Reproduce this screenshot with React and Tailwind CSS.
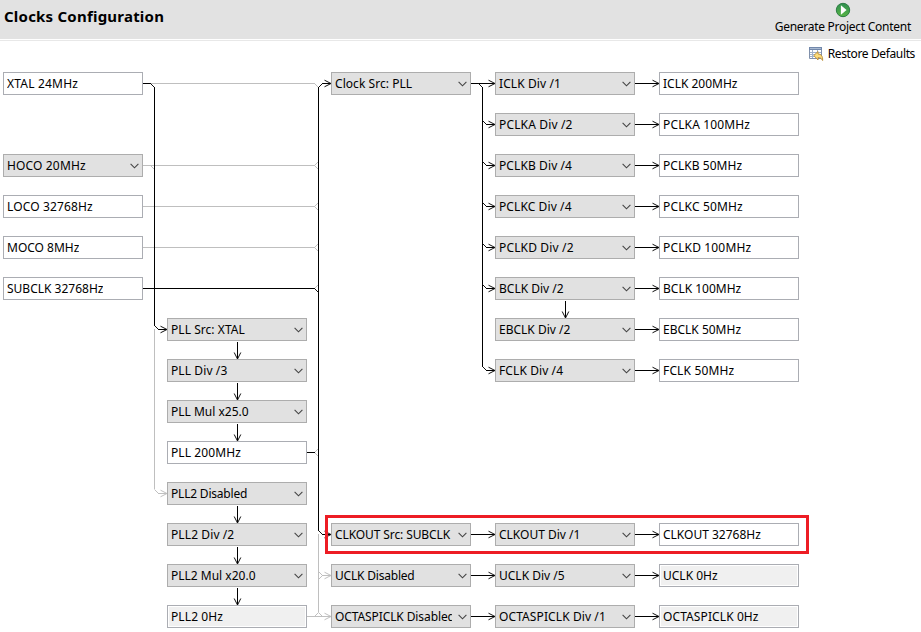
const C = {
  1: "col-start-1", 2: "col-start-2", 3: "col-start-3", 4: "col-start-4", 5: "col-start-5",
};
const R = [
  "row-start-1", "row-start-2", "row-start-3", "row-start-4", "row-start-5", "row-start-6", "row-start-7",
  "row-start-8", "row-start-9", "row-start-10", "row-start-11", "row-start-12", "row-start-13", "row-start-14",
];

// kind: v = value, s = select, d = disabled value
const NODES = [
  [1, 0, "v", "XTAL 24MHz", "tracking-[0.2px]"],
  [1, 2, "s", "HOCO 20MHz", "tracking-[0.15px]"],
  [1, 3, "v", "LOCO 32768Hz", "tracking-[0.15px]"],
  [1, 4, "v", "MOCO 8MHz"],
  [1, 5, "v", "SUBCLK 32768Hz"],
  [2, 6, "s", "PLL Src: XTAL", "tracking-[0.05px]"],
  [2, 7, "s", "PLL Div /3", "tracking-[0.1px]"],
  [2, 8, "s", "PLL Mul x25.0"],
  [2, 9, "v", "PLL 200MHz", "tracking-[0.1px]"],
  [2, 10, "s", "PLL2 Disabled", "tracking-[-0.2px]"],
  [2, 11, "s", "PLL2 Div /2", "tracking-[0.1px]"],
  [2, 12, "s", "PLL2 Mul x20.0"],
  [2, 13, "d", "PLL2 0Hz", "tracking-[0.1px]"],
  [3, 0, "s", "Clock Src: PLL", "tracking-[0.05px]"],
  [3, 11, "s", "CLKOUT Src: SUBCLK", "tracking-[-0.1px]"],
  [3, 12, "s", "UCLK Disabled", "tracking-[-0.2px]"],
  [3, 13, "s", "OCTASPICLK Disabled", "tracking-[-0.1px]"],
  [4, 0, "s", "ICLK Div /1", "tracking-[0.1px]"],
  [4, 1, "s", "PCLKA Div /2", "tracking-[0.15px]"],
  [4, 2, "s", "PCLKB Div /4", "tracking-[0.1px]"],
  [4, 3, "s", "PCLKC Div /4", "tracking-[0.1px]"],
  [4, 4, "s", "PCLKD Div /2", "tracking-[0.15px]"],
  [4, 5, "s", "BCLK Div /2"],
  [4, 6, "s", "EBCLK Div /2"],
  [4, 7, "s", "FCLK Div /4", "tracking-[0.1px]"],
  [4, 11, "s", "CLKOUT Div /1"],
  [4, 12, "s", "UCLK Div /5"],
  [4, 13, "s", "OCTASPICLK Div /1", "tracking-[0.1px]"],
  [5, 0, "v", "ICLK 200MHz"],
  [5, 1, "v", "PCLKA 100MHz", "tracking-[0.15px]"],
  [5, 2, "v", "PCLKB 50MHz", "tracking-[0.05px]"],
  [5, 3, "v", "PCLKC 50MHz", "tracking-[0.15px]"],
  [5, 4, "v", "PCLKD 100MHz", "tracking-[0.15px]"],
  [5, 5, "v", "BCLK 100MHz"],
  [5, 6, "v", "EBCLK 50MHz"],
  [5, 7, "v", "FCLK 50MHz", "tracking-[0.15px]"],
  [5, 11, "v", "CLKOUT 32768Hz"],
  [5, 12, "d", "UCLK 0Hz"],
  [5, 13, "d", "OCTASPICLK 0Hz", "tracking-[0.1px]"],
];

const KIND = {
  v: "border-[#abadb3] bg-white",
  s: "border-[#adadad] bg-[#e1e1e1]",
  d: "border-[#abadb3] bg-[#f0f0f0] shadow-[inset_0_0_0_1px_#fff]",
};

function Node({ col, row, kind, label, tracking = "" }) {
  return (
    <div className={`${C[col]} ${R[row]} ${KIND[kind]} flex items-center border pl-[3px]`}>
      <span className={`overflow-hidden whitespace-nowrap ${tracking} ${kind === "s" ? "w-[117px]" : ""}`}>{label}</span>
      {kind === "s" && (
        <svg className="ml-auto mr-[3.5px] shrink-0" width="9" height="6" viewBox="0 0 9 6">
          <path d="M.6 .9 4.5 4.8 8.4 .9" fill="none" stroke="#444" strokeWidth="1.1" />
        </svg>
      )}
    </div>
  );
}

const mid = (row) => 83.5 + 41 * row;
const headRight = (x, y) => `M${x - 6.5} ${y - 3.3}L${x} ${y}L${x - 6.5} ${y + 3.3}`;
const headDown = (x, y) => `M${x - 3.3} ${y - 6.5}L${x} ${y}L${x + 3.3} ${y - 6.5}`;

function Wires() {
  const gray = [];
  const black = [];
  const grayDiag = [];
  const heads = [];
  const diag = [];
  [0, 2, 3, 4].forEach((r) => gray.push(`M143 ${mid(r)}H315`));
  gray.push("M154.5 329V489", "M318.5 534V612", `M158 ${mid(10)}H167`, `M322 ${mid(12)}H331`, `M307 ${mid(13)}H331`);
  grayDiag.push(`M150.5 ${mid(2)}l4 4`, `M314.5 ${mid(0)}l4 4`);
  [2, 3, 4, 5, 9].forEach((r) => grayDiag.push(`M318.5 ${mid(r) - 4}l-4 4l4 4`));
  grayDiag.push(
    `M154.5 ${mid(10) - 4}l4 4`, `M318.5 ${mid(12) - 4}l4 4l-4 4`,
    `M314.5 ${mid(13)}l4 -4l4 4`,
    headRight(167, mid(10)), headRight(331, mid(12)), headRight(331, mid(13)),
  );
  black.push(
    "M143 83.5H151", "M154.5 87V326", `M158 ${mid(6)}H167`,
    "M143 288.5H315", "M307 452.5H315", "M318.5 87V531", "M322 83.5H331", "M322 534.5H331",
    "M471 83.5H495", "M482.5 87V367",
  );
  diag.push("M150.5 83.5l4 4", "M154.5 325.5l4 4", "M314.5 288.5l4 4", "M318.5 87.5l4 -4", "M318.5 530.5l4 4", "M478.5 83.5l4 4");
  heads.push(headRight(167, mid(6)), headRight(331, mid(0)), headRight(331, mid(11)), headRight(495, mid(0)));
  [1, 2, 3, 4, 5, 7].forEach((r) => {
    black.push(`M486 ${mid(r)}H495`);
    diag.push(`M482.5 ${mid(r) - 4}l4 4`);
    heads.push(headRight(495, mid(r)));
  });
  [0, 1, 2, 3, 4, 5, 6, 7, 11, 12, 13].forEach((r) => {
    black.push(`M635 ${mid(r)}H659`);
    heads.push(headRight(659, mid(r)));
  });
  [11, 12, 13].forEach((r) => {
    black.push(`M471 ${mid(r)}H495`);
    heads.push(headRight(495, mid(r)));
  });
  [6, 7, 8, 10, 11, 12].forEach((r) => {
    black.push(`M237.5 ${mid(r) + 12}V${mid(r + 1) - 12}`);
    heads.push(headDown(237.5, mid(r + 1) - 11.5));
  });
  black.push(`M565.5 ${mid(5) + 12}V${mid(6) - 12}`);
  heads.push(headDown(565.5, mid(6) - 11.5));
  return (
    <svg className="pointer-events-none absolute left-0 top-0" width="921" height="632" fill="none">
      <path d={gray.join("")} stroke="#bfbfbf" shapeRendering="crispEdges" />
      <path d={grayDiag.join("")} stroke="#c0c0c0" />
      <path d={black.join("")} stroke="#000" shapeRendering="crispEdges" />
      <path d={diag.join("")} stroke="#111" />
      <path d={heads.join("")} stroke="#111" />
    </svg>
  );
}

function PlayIcon() {
  return (
    <svg width="16" height="16" viewBox="0 0 16 16">
      <defs>
        <linearGradient id="play" x1="0" y1="0" x2="0" y2="1">
          <stop offset="0" stopColor="#2f8f50" />
          <stop offset="1" stopColor="#58b545" />
        </linearGradient>
      </defs>
      <circle cx="8" cy="8" r="6.7" fill="url(#play)" stroke="#2f7d45" />
      <path d="M5.900 3.200v9.600L11.600 8z" fill="#fff" />
    </svg>
  );
}

function RestoreIcon() {
  return (
    <svg width="16" height="16" viewBox="0 0 16 16">
      <path d="M1.500 1.500h12v11h-12z" fill="#fff" stroke="#8090ab" />
      <path d="M1 1h13v3H1z" fill="#7288ab" />
      <path d="M2 2.500h11" stroke="#a9bad2" />
      <path d="M2 6.500h11M2 8.500h11M2 10.500h11M4.500 4v8M9.500 4v8" stroke="#9fb1cb" />
      <path d="M5.800 9.500 10 5.500v2.500c3 0 5 2.200 4.600 6.500-1-2-2.300-2.900-4.600-2.900v2.400z" fill="#fbdc7c" stroke="#b98a34" strokeWidth=".9" />
    </svg>
  );
}

export default function App() {
  return (
    <div className="relative h-[632px] w-[921px] overflow-hidden bg-white font-['Noto_Sans','Open_Sans',sans-serif] text-[12px] leading-[17px] text-black">
      <header className="flex h-[39px] justify-between bg-[#e2e2e2] pl-[4px] pr-[10px]">
        <h1 className="pt-[6px] text-[15px] font-bold leading-[21px] tracking-[0.22px]">Clocks Configuration</h1>
        <button className="flex flex-col items-center pt-[2px]">
          <PlayIcon />
          <span className="whitespace-nowrap tracking-[-0.27px]">Generate Project Content</span>
        </button>
      </header>
      <div className="mt-px h-px bg-[#e8e8e8]" />
      <div className="flex h-[31px] items-start justify-end gap-[4px] pr-[6px] pt-[4px]">
        <span className="pt-[1px]"><RestoreIcon /></span>
        <span className="tracking-[-0.37px]">Restore Defaults</span>
      </div>
      <main className="grid grid-cols-[repeat(5,140px)] grid-rows-[repeat(14,23px)] gap-x-[24px] gap-y-[18px] pl-[3px]">
        {NODES.map(([col, row, kind, label, tracking]) => (
          <Node key={label} col={col} row={row} kind={kind} label={label} tracking={tracking} />
        ))}
      </main>
      <Wires />
      <div className="absolute left-[325px] top-[515px] h-[39px] w-[484px] border-[3px] border-[#ed1c24]" />
    </div>
  );
}
